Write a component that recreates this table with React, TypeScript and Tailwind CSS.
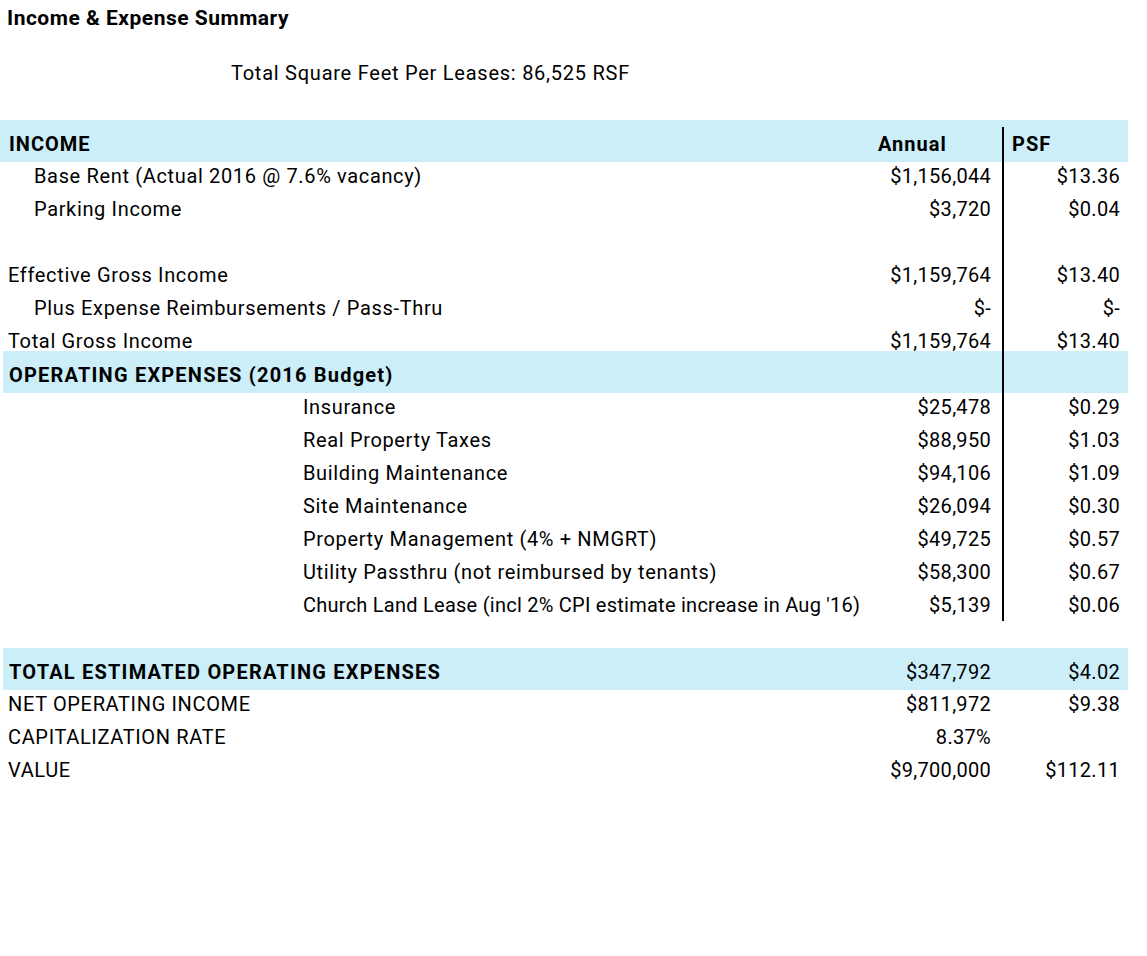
import React from 'react';

type Row = {
  label?: string;
  indent?: 0 | 1 | 2;
  annual?: string;
  psf?: string;
  band?: boolean;
  line?: boolean;
  tight?: boolean;
};

const rows: Row[] = [
  { label: 'Base Rent (Actual 2016 @ 7.6% vacancy)', indent: 1, annual: '$1,156,044', psf: '$13.36', line: true },
  { label: 'Parking Income', indent: 1, annual: '$3,720', psf: '$0.04', line: true },
  { line: true },
  { label: 'Effective Gross Income', annual: '$1,159,764', psf: '$13.40', line: true },
  { label: 'Plus Expense Reimbursements / Pass-Thru', indent: 1, annual: '$-', psf: '$-', line: true },
  { label: 'Total Gross Income', annual: '$1,159,764', psf: '$13.40', line: true },
  { label: 'OPERATING EXPENSES (2016 Budget)', band: true, line: true },
  { label: 'Insurance', indent: 2, annual: '$25,478', psf: '$0.29', line: true },
  { label: 'Real Property Taxes', indent: 2, annual: '$88,950', psf: '$1.03', line: true },
  { label: 'Building Maintenance', indent: 2, annual: '$94,106', psf: '$1.09', line: true },
  { label: 'Site Maintenance', indent: 2, annual: '$26,094', psf: '$0.30', line: true },
  { label: 'Property Management (4% + NMGRT)', indent: 2, annual: '$49,725', psf: '$0.57', line: true },
  { label: 'Utility Passthru (not reimbursed by tenants)', indent: 2, annual: '$58,300', psf: '$0.67', line: true },
  { label: "Church Land Lease (incl 2% CPI estimate increase in Aug '16)", indent: 2, annual: '$5,139', psf: '$0.06', line: true, tight: true },
  {},
  { label: 'TOTAL ESTIMATED OPERATING EXPENSES', band: true, annual: '$347,792', psf: '$4.02' },
  { label: 'NET OPERATING INCOME', annual: '$811,972', psf: '$9.38' },
  { label: 'CAPITALIZATION RATE', annual: '8.37%' },
  { label: 'VALUE', annual: '$9,700,000', psf: '$112.11' },
];

const indentCls = ['pl-[8px]', 'pl-[34px]', 'pl-[303px]'];

function TableRow({ row }: { row: Row }) {
  // bands are 42px tall but keep the 33px row pitch
  const pad = row.band ? 'pt-[8px] leading-[33px]' : 'pt-[2px] leading-[31px]';
  let labelCls = `flex-1 whitespace-nowrap ${pad} `;
  if (row.band) labelCls += 'pl-[6px] font-bold tracking-[1.2px]';
  else labelCls += `${indentCls[row.indent ?? 0]} ${row.tight ? 'tracking-[0.25px]' : 'tracking-[0.65px]'}`;
  return (
    <div
      className={
        row.band
          ? 'flex h-[42px] -mt-[6px] -mb-[3px] ml-[3px] bg-[#cbeef9]'
          : 'flex h-[33px]'
      }
    >
      <div className={labelCls}>{row.label}</div>
      <div className={`w-[132px] text-right pr-[11px] tracking-[0.3px] ${pad}`}>{row.annual}</div>
      <div
        className={`w-[126px] text-right pr-[8px] tracking-[0.3px] ${pad} ${
          row.line ? 'border-l-2 border-black' : 'pl-[2px]'
        }`}
      >
        {row.psf}
      </div>
    </div>
  );
}

export default function App() {
  return (
    <div
      className="w-[1147px] h-[956px] bg-white text-black text-[20px]"
      style={{ fontFamily: 'Roboto, "Liberation Sans", sans-serif' }}
    >
      <div className="pl-[7px] h-[36px] leading-[36px] text-[21px] font-bold tracking-[0.5px]">
        Income &amp; Expense Summary
      </div>
      <div className="mt-[20px] pl-[231px] h-[34px] leading-[34px] tracking-[0.75px]">
        Total Square Feet Per Leases: 86,525 RSF
      </div>

      <div className="w-[1128px] mt-[30px]">
        {/* header band */}
        <div className="flex h-[42px] -mb-[3px] bg-[#cbeef9] font-bold tracking-[1px]">
          <div className="flex-1 pl-[9px] pt-[8px] leading-[33px]">INCOME</div>
          <div className="w-[132px] pl-[8px] pt-[8px] leading-[33px]">Annual</div>
          <div className="w-[126px] mt-[7px] pt-[1px] pl-[8px] leading-[33px] border-l-2 border-black">PSF</div>
        </div>
        {rows.map((r, i) => (
          <TableRow key={i} row={r} />
        ))}
      </div>
    </div>
  );
}
